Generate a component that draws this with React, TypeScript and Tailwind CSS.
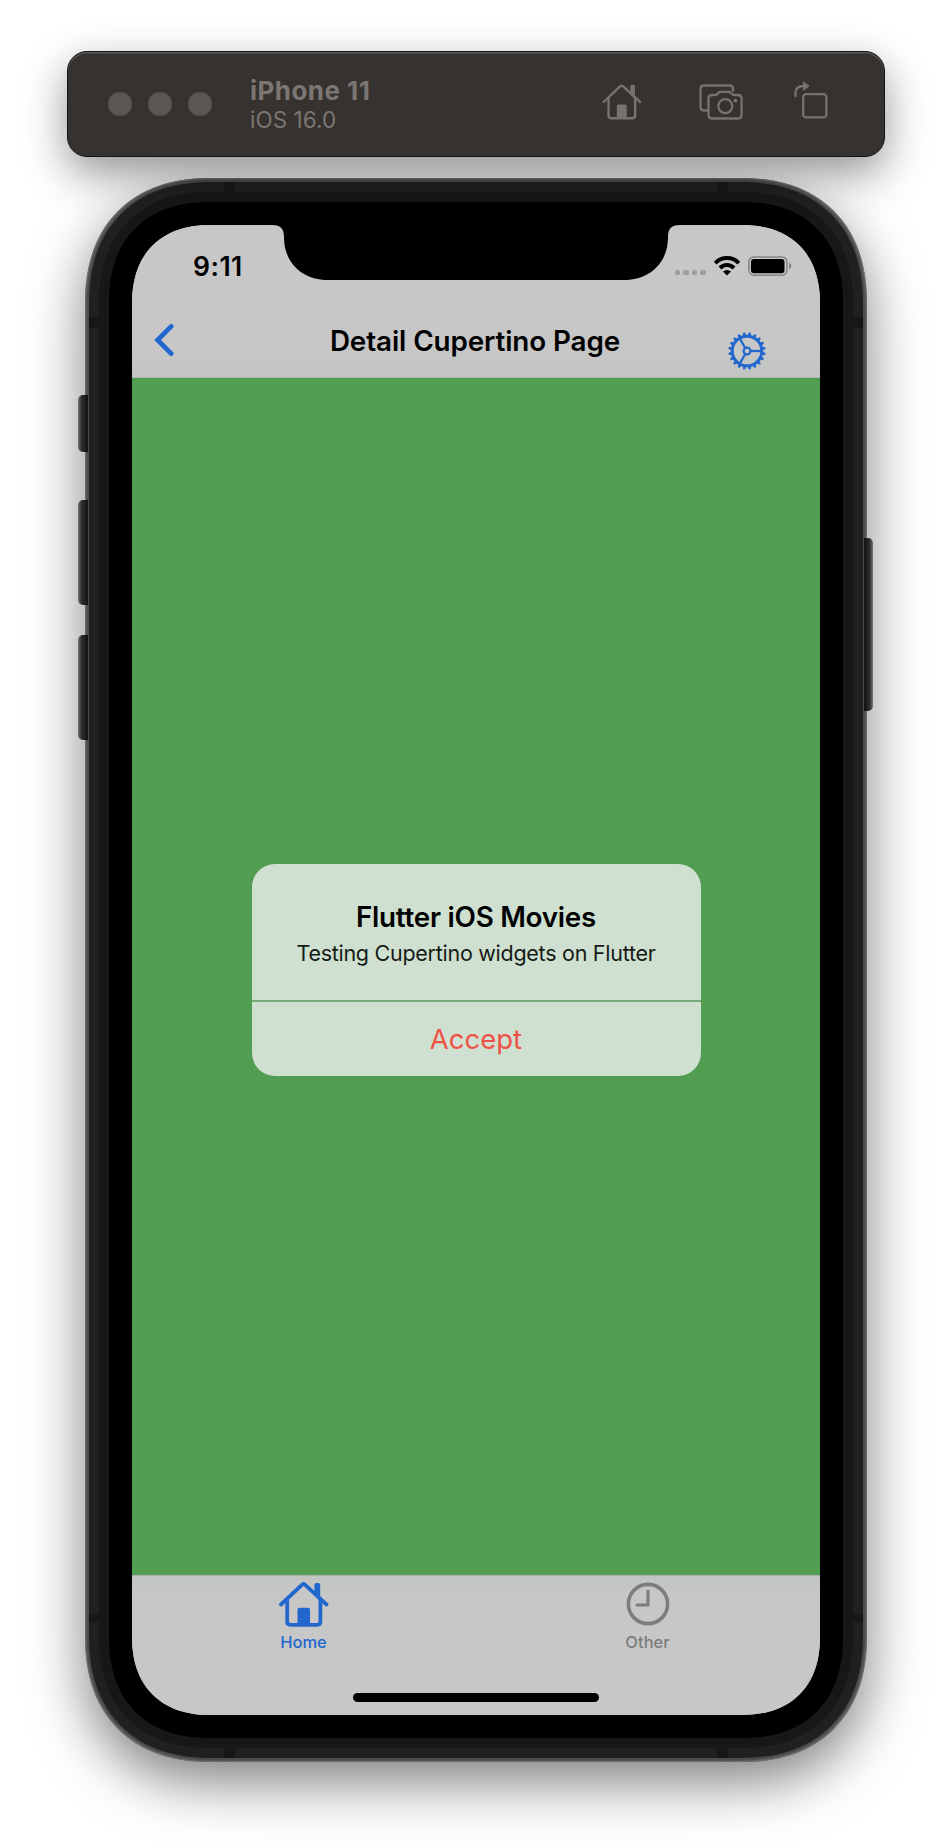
import React from "react";

function HouseIcon({ className, thick }: { className: string; thick: boolean }) {
  return (
    <svg viewBox="0 0 50 45" className={className} fill="none" stroke="currentColor" strokeLinecap="round" strokeLinejoin="round" strokeWidth={thick ? 3.8 : 3}>
      <path d="M2 22.5 L22.9 2.8 Q24.5 1.3 26.1 2.8 L47.5 22.5" />
      <path d="M8.2 17.5V39.5Q8.2 42.8 11.4 42.8H38.2Q41.4 42.8 41.4 39.5V17.5" />
      <path d="M18.5 43V27.7Q18.5 25.7 20.5 25.7H29Q31 25.7 31 27.7V43Z" fill="currentColor" stroke="none" />
      <path d="M35.4 10.5V3Q35.4 1 37.3 1H39.3Q41.2 1 41.2 3V16Z" fill="currentColor" stroke="none" />
    </svg>
  );
}

function ScreenshotIcon() {
  return (
    <svg viewBox="0 0 44 36" className="h-9 w-11" fill="none" stroke="currentColor" strokeWidth="2.3" strokeLinejoin="round">
      <path d="M10 26.5H5Q1.5 26.5 1.5 23V5Q1.5 1.5 5 1.5H30.5Q34 1.5 34 5V7.5" />
      <path d="M13 11H16.5Q17.8 11 18.5 10L19.8 8.6Q20.5 7.8 21.7 7.8H30Q31.2 7.8 32 8.7L33.1 10Q33.9 11 35.3 11H39Q42.6 11 42.6 14.5V31Q42.6 34.5 39 34.5H13Q9.5 34.5 9.5 31V14.5Q9.5 11 13 11Z" />
      <circle cx="26.3" cy="22.2" r="7" />
      <circle cx="36.4" cy="16.6" r="1.9" fill="currentColor" stroke="none" />
    </svg>
  );
}

function RotateIcon() {
  return (
    <svg viewBox="0 0 34 38" className="h-[38px] w-[34px]" fill="none" stroke="currentColor" strokeWidth="2.3" strokeLinecap="round">
      <rect x="9.2" y="13.2" width="23.2" height="23.2" rx="3" />
      <path d="M1.5 15.2V12Q1.5 5 10 5" />
      <path d="M9.8 1.2L15 5L9.8 9Z" fill="currentColor" strokeWidth="1" strokeLinejoin="round" />
    </svg>
  );
}

function WindowBar() {
  return (
    <header className="relative z-10 mx-auto flex h-[106px] w-[818px] items-center rounded-[20px] border border-[#151413] bg-[#36322f] pl-10 shadow-[0_16px_44px_rgba(0,0,0,0.42),inset_0_1.5px_0_#5c5b5a]">
      <div className="flex gap-4">
        <span className="size-6 rounded-full bg-[#5b5754]" />
        <span className="size-6 rounded-full bg-[#5b5754]" />
        <span className="size-6 rounded-full bg-[#5b5754]" />
      </div>
      <div className="ml-[38px] w-[352px] pt-[2px] text-[#7b7673]">
        <div className="text-[26px] leading-[30px] font-bold tracking-[0.45px]">iPhone 11</div>
        <div className="text-[22.5px] leading-[28px] tracking-[0.05px]">iOS 16.0</div>
      </div>
      <div className="flex pb-[5px] text-[#777270]">
        <HouseIcon className="h-[36px] w-10" thick={false} />
        <div className="ml-[57px]"><ScreenshotIcon /></div>
        <div className="-mt-[3px] ml-[50.5px]"><RotateIcon /></div>
      </div>
    </header>
  );
}

const teeth = Array.from({ length: 20 }, (_, i) => i * 18 + 9);

function GearIcon() {
  return (
    <svg viewBox="-19 -19 38 38" className="size-[38px]" fill="none" stroke="currentColor">
      <circle r="14.8" strokeWidth="3" />
      <circle r="3.4" strokeWidth="2.2" />
      {[0, 120, 240].map((a) => (
        <path key={a} d="M3.8 0H14" strokeWidth="2.3" transform={`rotate(${a})`} />
      ))}
      {teeth.map((a) => (
        <path key={a} d="M15.5 -1.7L18.6 -1V1L15.5 1.7Z" fill="currentColor" stroke="none" transform={`rotate(${a})`} />
      ))}
    </svg>
  );
}

function StatusBar() {
  return (
    <div className="relative flex h-[73px] justify-between">
      <div className="pt-[25px] pl-[61px] text-[26.5px] leading-8 font-semibold tracking-[0.5px]">9:11</div>
      <svg viewBox="0 0 408 54" className="absolute top-0 left-[140px] h-[55px] w-[408px]" preserveAspectRatio="none">
        <path d="M0 0H408C399 0 396 4 396 12C396 37 378 54 352 54H56C30 54 12 37 12 12C12 4 9 0 0 0Z" />
      </svg>
      <div className="mt-[31px] mr-[28.5px] flex h-5 items-start">
        <div className="mt-[14px] flex gap-[3px]">
          <span className="size-[5.5px] rounded-[1.5px] bg-[#a0a0a0]" />
          <span className="size-[5.5px] rounded-[1.5px] bg-[#a0a0a0]" />
          <span className="size-[5.5px] rounded-[1.5px] bg-[#a0a0a0]" />
          <span className="size-[5.5px] rounded-[1.5px] bg-[#a0a0a0]" />
        </div>
        <svg viewBox="0 0 26 20" className="ml-2 h-5 w-[26px]" fill="none" stroke="#000" strokeWidth="4">
          <path d="M1.2 7.1Q6.2 2.1 13 2.1T24.8 7.1" />
          <path d="M6 12Q9 8.9 13 8.9T20 12" />
          <path d="M9 15.6Q13 12.3 17 15.6L13 19.4Z" fill="#000" stroke="none" />
        </svg>
        <svg viewBox="0 0 44 20" className="ml-2 h-5 w-11" fill="none">
          <rect x="0.9" y="0.9" width="38" height="18.4" rx="5" stroke="#858585" strokeWidth="1.5" />
          <rect x="3" y="3" width="33.5" height="14.2" rx="3" fill="#000" />
          <path d="M41 6.8Q43.4 7.8 43.4 10T41 13.2Z" fill="#858585" />
        </svg>
      </div>
    </div>
  );
}

function NavigationBar() {
  return (
    <div className="grid h-[80px] grid-cols-[139px_1fr_141px] border-b border-[#b0b4b0]">
      <svg viewBox="0 0 20 34" className="mt-[25.5px] ml-[22px] h-[34px] w-5 text-[#2267ce]" fill="none" stroke="currentColor" strokeWidth="4.8" strokeLinecap="round">
        <path d="M17.2 3.4L3.6 17L17.2 30.6" />
      </svg>
      <h1 className="pt-[25px] text-center text-[27.8px] leading-[36px] font-[580] tracking-[-0.1px] whitespace-nowrap">Detail Cupertino Page</h1>
      <button className="mt-[34px] ml-[48.5px] size-[38px] text-[#2267ce]"><GearIcon /></button>
    </div>
  );
}

function AlertDialog() {
  return (
    <section className="h-[212px] w-[449px] overflow-hidden rounded-[23px] bg-[#cfe0d1] text-center">
      <div className="h-[136px] pt-[35px]">
        <h2 className="text-[27.8px] leading-[36px] font-[580] tracking-[-0.25px]">Flutter iOS Movies</h2>
        <p className="text-[21.5px] leading-[36px] tracking-[-0.27px] text-[#151a16]">Testing Cupertino widgets on Flutter</p>
      </div>
      <button className="block h-[76px] w-full border-t-2 border-[#77aa78] pt-[2px] text-[27.5px] text-[#ee5145]">Accept</button>
    </section>
  );
}

function TabBar() {
  return (
    <nav className="flex h-[140px] flex-col items-center border-t border-[#a9b1aa] bg-linear-to-b from-[#c1c5c2] to-[#c7c7c7] to-15%">
      <div className="flex h-[117px] w-full text-[16.5px] leading-5 font-medium">
        <div className="flex w-[344px] flex-col items-center pt-1.5 text-[#2267ce]">
          <HouseIcon className="mr-px h-[45px] w-[50px]" thick />
          <span className="mt-[5px] mr-px">Home</span>
        </div>
        <div className="flex w-[344px] flex-col items-center pt-1.5 text-[#7d7d7d]">
          <svg viewBox="0 0 44 45" className="mr-px h-[45px] w-11" fill="none" stroke="currentColor" strokeWidth="3.6" strokeLinecap="round" strokeLinejoin="round">
            <circle cx="22" cy="22" r="19.6" />
            <path d="M22 9V23H11" strokeWidth="3.2" />
          </svg>
          <span className="mt-[5px] mr-px">Other</span>
        </div>
      </div>
      <div className="h-[9px] w-[246px] rounded-full bg-black" />
    </nav>
  );
}

function Phone() {
  const side = "absolute -left-[7px] w-[10px] rounded-l-[5px] bg-linear-to-r from-[#777] via-[#303030] via-35% to-[#111]";
  return (
    <div className="relative mx-auto mt-[20.5px] h-[1584.5px] w-[782px]">
      <div className="relative h-full rounded-[127px] bg-[#4a4a4a] p-1 shadow-[0_20px_55px_rgba(0,0,0,0.5),inset_0_0_2px_1px_#777] [corner-shape:superellipse(1.2)]">
        <div className="h-full rounded-[123px] bg-[#202020] p-[10px] [corner-shape:superellipse(1.2)]">
          <div className="h-full rounded-[112px] bg-[#171717] p-[10px] [corner-shape:superellipse(1.2)]">
            <div className="h-full rounded-[101px] bg-black p-[23px] [corner-shape:superellipse(1.2)]">
              <main className="flex h-full flex-col overflow-hidden rounded-[79px] bg-[#c7c7c7] [corner-shape:superellipse(1.2)]">
                <div className="bg-linear-to-b from-[#c7c7c7] from-80% to-[#c1c4c2]">
                  <StatusBar />
                  <NavigationBar />
                </div>
                <div className="flex flex-1 justify-center bg-[#519d51] pt-[486px]">
                  <AlertDialog />
                </div>
                <TabBar />
              </main>
            </div>
          </div>
        </div>
        <span className="absolute top-1 left-[139px] h-[10px] w-[11px] bg-[#171717]" />
        <span className="absolute top-1 right-[139px] h-[10px] w-[11px] bg-[#171717]" />
        <span className="absolute bottom-1 left-[139px] h-[10px] w-[11px] bg-[#171717]" />
        <span className="absolute right-[139px] bottom-1 h-[10px] w-[11px] bg-[#171717]" />
        <span className="absolute top-[139px] left-1 h-[11px] w-[10px] bg-[#171717]" />
        <span className="absolute top-[139px] right-1 h-[11px] w-[10px] bg-[#171717]" />
        <span className="absolute bottom-[140px] left-1 h-[8px] w-[10px] bg-[#171717]" />
        <span className="absolute right-1 bottom-[140px] h-[8px] w-[10px] bg-[#171717]" />
      </div>
      <span className={side + " top-[217px] h-[57px]"} />
      <span className={side + " top-[322px] h-[105px]"} />
      <span className={side + " top-[457px] h-[105px]"} />
      <span className="absolute top-[360px] -right-[6px] h-[173px] w-[9px] rounded-r-[5px] bg-linear-to-l from-[#777] via-[#303030] via-35% to-[#111]" />
    </div>
  );
}

export default function App() {
  return (
    <div className="h-[1848px] w-[952px] overflow-hidden bg-white pt-[51px] font-[Inter,'Liberation_Sans',sans-serif] text-black">
      <WindowBar />
      <Phone />
    </div>
  );
}
